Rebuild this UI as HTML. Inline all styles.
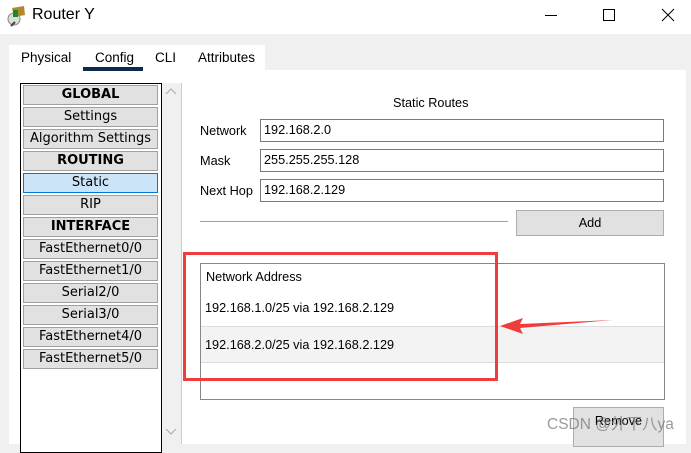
<!DOCTYPE html>
<html><head><meta charset="utf-8"><style>
*{margin:0;padding:0;box-sizing:border-box}
body{width:691px;height:444px;overflow:hidden;background:#f0f0f0;font-family:"Liberation Sans","Noto Sans CJK SC",sans-serif;font-size:12.7px;color:#000;position:relative}
.a{position:absolute}
.btn{position:absolute;left:23px;width:135px;height:20px;background:#e1e1e1;border:1px solid #a0a0a0;text-align:center;line-height:18px;font-family:"DejaVu Sans",sans-serif;font-size:13px}
.b{font-weight:bold}
.lbl{position:absolute;left:200px;font-size:12.7px}
.in{position:absolute;left:260px;width:404px;height:23px;border:1px solid #7a7a7a;background:#fff;padding-left:3px;line-height:21px;font-size:12.7px}
.tab{position:absolute;top:50px;font-size:13.5px}
</style></head><body>
<div class="a" style="left:0;top:0;width:691px;height:34px;background:#fff"></div>
<svg class="a" style="left:6px;top:5px" width="22" height="22" viewBox="0 0 22 22"><ellipse cx="8" cy="14" rx="6" ry="6" fill="#ddd" stroke="#888"/><path d="M6 3 L18 1 L19 10 L8 12 Z" fill="#b08830"/><rect x="7" y="5" width="5" height="7" fill="#1c8a1c"/><line x1="9" y1="17" x2="5" y2="21" stroke="#444" stroke-width="2"/></svg>
<div class="a" style="left:32px;top:6px;font-size:16px">Router Y</div>
<div class="a" style="left:545px;top:15px;width:12px;height:1px;background:#000"></div>
<div class="a" style="left:603px;top:9px;width:12px;height:12px;border:1px solid #000"></div>
<svg class="a" style="left:661px;top:8px" width="14" height="14"><path d="M1 1L13 13M13 1L1 13" stroke="#000" stroke-width="1"/></svg>
<div class="a" style="left:9px;top:45px;width:256px;height:30px;background:#fff"></div>
<div class="a" style="left:9px;top:70px;width:677px;height:374px;background:#fff"></div>
<div class="tab" style="left:21px">Physical</div>
<div class="tab" style="left:95px">Config</div>
<div class="a" style="left:83px;top:67px;width:60px;height:4px;background:#0e2a4a"></div>
<div class="tab" style="left:155px">CLI</div>
<div class="tab" style="left:198px">Attributes</div>
<div class="a" style="left:20px;top:83px;width:142px;height:370px;border:1px solid #000;background:#fff"></div>
<div class="a" style="left:162px;top:83px;width:20px;height:361px;background:#f0f0f0;border-right:1px solid #ccc"></div>
<svg class="a" style="left:165px;top:88px" width="12" height="8"><path d="M1 6L6 1L11 6" stroke="#aaa" fill="none"/></svg>
<svg class="a" style="left:165px;top:428px" width="12" height="8"><path d="M1 1L6 6L11 1" stroke="#aaa" fill="none"/></svg>
<div class="btn b" style="top:85px">GLOBAL</div>
<div class="btn" style="top:107px">Settings</div>
<div class="btn" style="top:129px">Algorithm Settings</div>
<div class="btn b" style="top:151px">ROUTING</div>
<div class="btn" style="top:173px;background:#cce4f7;border-color:#0078d7">Static</div>
<div class="btn" style="top:195px">RIP</div>
<div class="btn b" style="top:217px">INTERFACE</div>
<div class="btn" style="top:239px">FastEthernet0/0</div>
<div class="btn" style="top:261px">FastEthernet1/0</div>
<div class="btn" style="top:283px">Serial2/0</div>
<div class="btn" style="top:305px">Serial3/0</div>
<div class="btn" style="top:327px">FastEthernet4/0</div>
<div class="btn" style="top:349px">FastEthernet5/0</div>
<div class="a" style="left:393px;top:96px">Static Routes</div>
<div class="lbl" style="top:124px">Network</div>
<div class="in" style="top:119px">192.168.2.0</div>
<div class="lbl" style="top:154px">Mask</div>
<div class="in" style="top:149px">255.255.255.128</div>
<div class="lbl" style="top:184px">Next Hop</div>
<div class="in" style="top:179px">192.168.2.129</div>
<div class="a" style="left:200px;top:221px;width:308px;height:1px;background:#a0a0a0"></div>
<div class="a" style="left:516px;top:210px;width:148px;height:26px;background:#e1e1e1;border:1px solid #adadad;text-align:center;line-height:24px">Add</div>
<div class="a" style="left:200px;top:263px;width:465px;height:137px;border:1px solid #828790;background:#fff"></div>
<div class="a" style="left:201px;top:326px;width:463px;height:37px;background:#f3f3f3;border-top:1px solid #dcdcdc;border-bottom:1px solid #dcdcdc"></div>
<div class="a" style="left:206px;top:270px">Network Address</div>
<div class="a" style="left:205px;top:301px">192.168.1.0/25 via 192.168.2.129</div>
<div class="a" style="left:205px;top:338px">192.168.2.0/25 via 192.168.2.129</div>
<div class="a" style="left:183px;top:252px;width:315px;height:129px;border:3px solid #f03c3c"></div>
<svg class="a" style="left:498px;top:315px" width="120" height="22"><path d="M2 11L25 3L22 9L115 5L22 13L25 19Z" fill="#f03c3c"/></svg>
<div class="a" style="left:573px;top:407px;width:91px;height:40px;background:#e1e1e1;border:1px solid #adadad;text-align:center;line-height:26px">Remove</div>
<div class="a" style="left:547px;top:412px;font-size:15.5px;color:rgba(120,120,120,0.75)">CSDN @外下八ya</div>
<div class="a" style="left:686px;top:70px;width:5px;height:374px;background:#f0f0f0"></div>
</body></html>
